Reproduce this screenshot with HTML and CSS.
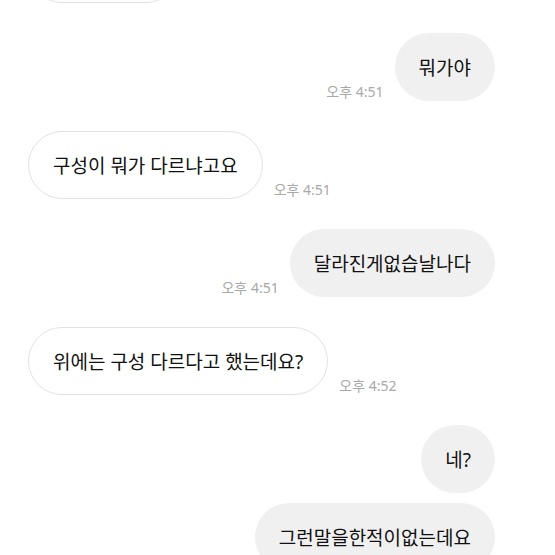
FILE: index.html
```html
<!DOCTYPE html>
<html lang="ko">
<head>
  <meta charset="UTF-8" />
  <meta name="viewport" content="width=device-width, initial-scale=1.0"/>
  <title>채팅</title>
  <link rel="stylesheet" href="styles.css">
</head>
<body>
  <main class="chat">
    <div class="row them first">
      <div class="bubble"></div>
    </div>
    <div class="row me">
      <span class="time">오후 4:51</span>
      <div class="bubble">뭐가야</div>
    </div>
    <div class="row them">
      <div class="bubble">구성이 뭐가 다르냐고요</div>
      <span class="time">오후 4:51</span>
    </div>
    <div class="row me">
      <span class="time">오후 4:51</span>
      <div class="bubble">달라진게없습날나다</div>
    </div>
    <div class="row them">
      <div class="bubble">위에는 구성 다르다고 했는데요?</div>
      <span class="time">오후 4:52</span>
    </div>
    <div class="row me">
      <div class="bubble">네?</div>
    </div>
    <div class="row me stacked">
      <div class="bubble">그런말을한적이없는데요</div>
    </div>
  </main>
</body>
</html>
```

FILE: styles.css
```css
body {
  margin: 0;
  padding: 0;
  background: #ffffff;
  color: #111111;
  font-family: "Noto Sans", "Noto Sans CJK KR", sans-serif;
  overflow: hidden;
}

.chat {
  display: flex;
  flex-direction: column;
  gap: 30px;
  padding: 0 60px 0 28px;
}

.row {
  display: flex;
  align-items: flex-end;
  gap: 11px;
}

.row.me {
  justify-content: flex-end;
}

.row.first {
  margin-top: -65px;
}

.row.stacked {
  margin-top: -20px;
}

.bubble {
  height: 68px;
  box-sizing: border-box;
  padding: 0 24px;
  border-radius: 34px;
  display: flex;
  align-items: center;
  font-size: 19px;
  white-space: nowrap;
}

.them .bubble {
  background: #ffffff;
  border: 1px solid #e2e2e2;
}

.me .bubble {
  background: #f0f0f0;
}

.first .bubble {
  width: 152px;
}

.time {
  font-size: 14px;
  line-height: 18px;
  color: #a8a8a8;
  white-space: nowrap;
}
```
